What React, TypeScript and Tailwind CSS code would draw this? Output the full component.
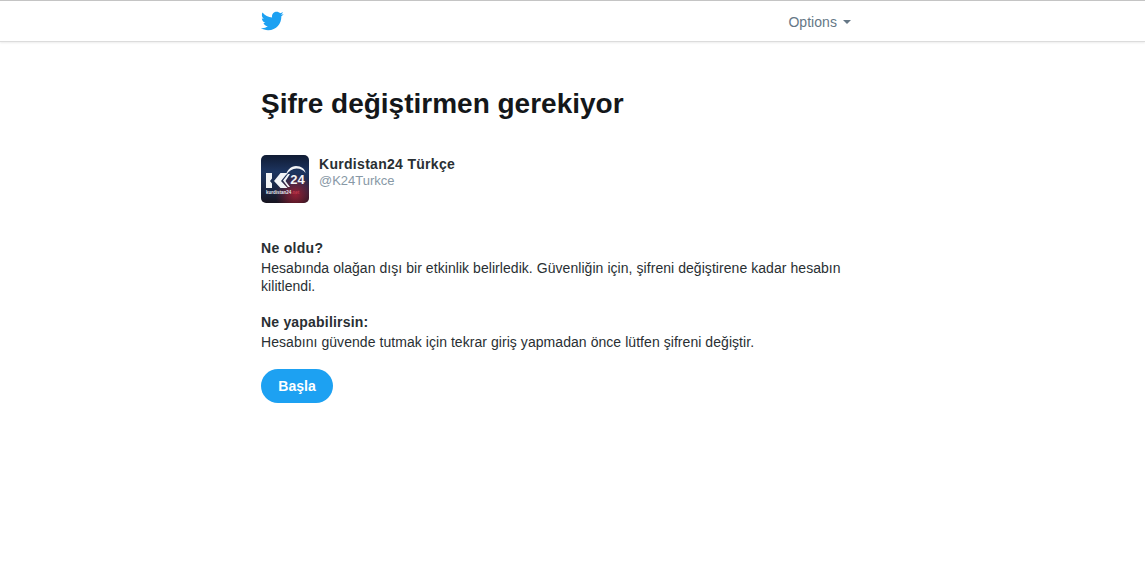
export default function App() {
  return (
    <div className="min-h-[567px] bg-white font-['Liberation_Sans',Arial,sans-serif] text-[#14171a]">
      <header className="h-[42px] border-t border-t-[#c4c4c4] border-b border-b-[#dcdcdc] shadow-[0_1px_2px_rgba(0,0,0,0.08)]">
        <div className="ml-[261px] flex h-[40px] w-[590px] items-start justify-between">
          <svg viewBox="0 0 24 24" className="ml-[-1px] mt-[8px] h-[24px] w-[24px] fill-[#1da1f2]">
            <path d="M23.643 4.937c-.835.37-1.732.62-2.675.733.962-.576 1.7-1.49 2.048-2.578-.9.534-1.897.922-2.958 1.13-.85-.904-2.06-1.47-3.4-1.47-2.572 0-4.658 2.086-4.658 4.66 0 .364.042.718.12 1.06-3.873-.195-7.304-2.05-9.602-4.868-.4.69-.63 1.49-.63 2.342 0 1.616.823 3.043 2.072 3.878-.764-.025-1.482-.234-2.11-.583v.06c0 2.257 1.605 4.14 3.737 4.568-.392.106-.803.162-1.227.162-.3 0-.593-.028-.877-.082.593 1.85 2.313 3.198 4.352 3.234-1.595 1.25-3.604 1.995-5.786 1.995-.376 0-.747-.022-1.112-.065 2.062 1.323 4.51 2.093 7.14 2.093 8.57 0 13.255-7.098 13.255-13.254 0-.2-.005-.402-.014-.602.91-.658 1.7-1.477 2.323-2.41z" />
          </svg>
          <div className="mt-[12px] flex items-center gap-[6px] text-[14px] leading-[18px] tracking-[0.05px] text-[#657786]">
            <span>Options</span>
            <span className="h-0 w-0 border-x-[4px] border-t-[4px] border-x-transparent border-t-[#657786]" />
          </div>
        </div>
      </header>
      <main className="ml-[261px] w-[590px]">
        <h1 className="mt-[46px] text-[28px] font-bold leading-[32px] text-[#14171a]">Şifre değiştirmen gerekiyor</h1>
        <div className="mt-[35px] flex items-start gap-[10px]">
          <div className="h-12 w-12 overflow-hidden rounded-[5px]">
            <svg viewBox="0 0 48 48" className="h-12 w-12">
              <defs>
                <linearGradient id="bg" x1="0" y1="0" x2="0" y2="1">
                  <stop offset="0" stopColor="#101b33" />
                  <stop offset="0.35" stopColor="#1d3560" />
                  <stop offset="0.75" stopColor="#18233f" />
                  <stop offset="1" stopColor="#17141f" />
                </linearGradient>
                <radialGradient id="red" cx="0.72" cy="0.82" r="0.42">
                  <stop offset="0" stopColor="#a81f33" stopOpacity="0.85" />
                  <stop offset="1" stopColor="#a81f33" stopOpacity="0" />
                </radialGradient>
              </defs>
              <rect width="48" height="48" fill="url(#bg)" />
              <rect width="48" height="48" fill="url(#red)" />
              <path d="M5 18h6v5.500l-2 2.500 2 2.500V33H5z M13 26l6.500-8h7L20 26l6.500 7h-7z M22 25.500l5-6.500h2l-4.500 7 4.500 6h-2z" fill="#f2f4f7" />
              <path d="M25 20c1-5 5-9 10-9 5.500 0 9 3 9.500 7-2-3-5-4.500-9-4.500-4 0-7.500 2.500-10.500 6.500z" fill="#f2f4f7" />
              <text x="36.500" y="29" textAnchor="middle" fontSize="13" fontWeight="700" fill="#f2f4f7" fontFamily="Liberation Sans, sans-serif">24</text>
              <text x="5" y="39" fontSize="4.500" fontWeight="700" fill="#e8e8ee" fontFamily="Liberation Sans, sans-serif">kurdistan24<tspan fill="#c03a4c">.net</tspan></text>
            </svg>
          </div>
          <div>
            <div className="text-[14px] font-bold leading-[18px] tracking-[0.3px] text-[#292f33]">Kurdistan24 Türkçe</div>
            <div className="text-[13px] leading-[16px] text-[#8899a6]">@K24Turkce</div>
          </div>
        </div>
        <div className="mt-[36px] text-[14px] leading-[18px] tracking-[0.055px] text-[#292f33]">
          <div className="mb-[2px] font-bold tracking-[0.3px]">Ne oldu?</div>
          <p>Hesabında olağan dışı bir etkinlik belirledik. Güvenliğin için, şifreni değiştirene kadar hesabın kilitlendi.</p>
        </div>
        <div className="mt-[18px] text-[14px] leading-[18px] tracking-[0.055px] text-[#292f33]">
          <div className="mb-[2px] font-bold tracking-[0.2px]">Ne yapabilirsin:</div>
          <p>Hesabını güvende tutmak için tekrar giriş yapmadan önce lütfen şifreni değiştir.</p>
        </div>
        <button className="mt-[18px] h-[34px] w-[72px] rounded-full bg-[#1da1f2] text-[14px] font-bold text-white">Başla</button>
      </main>
    </div>
  );
}
